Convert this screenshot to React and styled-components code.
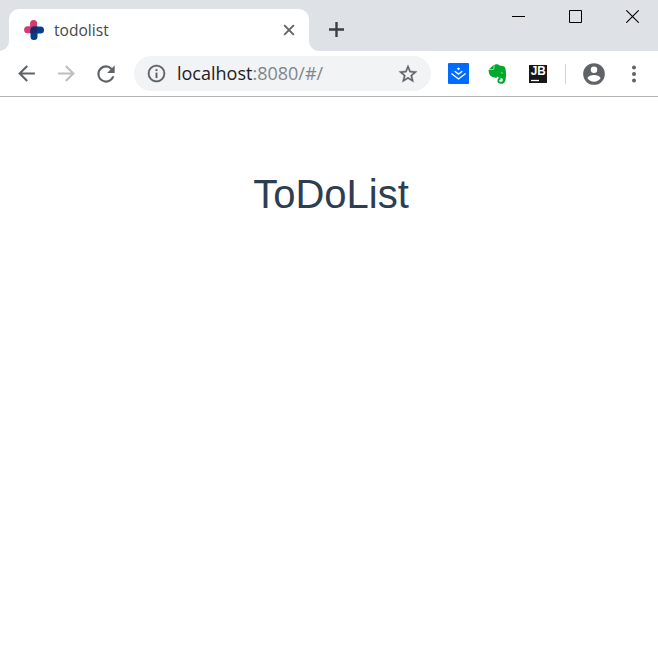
import React from "react";
import styled, { createGlobalStyle } from "styled-components";

const GlobalStyle = createGlobalStyle`
  *, *::before, *::after { box-sizing: border-box; }
  body { margin: 0; background: #fff; overflow: hidden; }
`;

const Browser = styled.div`
  display: flex;
  flex-direction: column;
  width: 658px;
  height: 667px;
  background: #fff;
  font-family: "Open Sans", "Noto Sans", sans-serif;
`;

const TabStrip = styled.header`
  display: flex;
  align-items: flex-end;
  height: 51px;
  padding-left: 9px;
  background: #dee1e6;
`;

const Tab = styled.div`
  position: relative;
  display: flex;
  align-items: center;
  width: 300px;
  height: 42px;
  padding: 0 13px 0 14px;
  border-radius: 10px 10px 0 0;
  background: #fff;

  &::before,
  &::after {
    content: "";
    position: absolute;
    bottom: 0;
    width: 10px;
    height: 10px;
  }
  &::before {
    left: -10px;
    background: radial-gradient(circle at 0 0, transparent 9.5px, #fff 10.3px);
  }
  &::after {
    right: -10px;
    background: radial-gradient(circle at 100% 0, transparent 9.5px, #fff 10.3px);
  }
`;

const TabTitle = styled.span`
  flex: 1;
  margin-left: 9px;
  color: #45484d;
  font-size: 15.6px;
  line-height: 20px;
`;

const Icon = styled.svg`
  display: block;
  flex: none;
  width: ${(p) => p.$size}px;
  height: ${(p) => p.$size}px;
  color: ${(p) => p.$color || "#5f6368"};
`;

const IconButton = styled.button`
  display: flex;
  align-items: center;
  justify-content: center;
  flex: none;
  width: ${(p) => p.$width || 40}px;
  height: ${(p) => p.$height || 36}px;
  padding: 0;
  border: 0;
  background: none;
`;

const NewTab = styled(IconButton)`
  margin-left: 7px;
  align-self: flex-end;
`;

const WindowControls = styled.div`
  display: flex;
  align-self: flex-start;
  margin-left: auto;
  margin-right: -3px;
`;

const Toolbar = styled.nav`
  display: flex;
  align-items: center;
  height: 46px;
  padding: 0 0 0 6px;
  border-bottom: 1px solid #b3b3b4;
`;

const AddressBar = styled.div`
  display: flex;
  align-items: center;
  width: 297px;
  height: 35px;
  margin-left: 8px;
  margin-right: 6px;
  padding: 0 12px 0 12px;
  border-radius: 18px;
  background: #f1f3f4;
`;

const Url = styled.span`
  flex: 1;
  margin-left: 10px;
  padding-bottom: 2px;
  color: #80868b;
  font-size: 18px;
  line-height: 24px;
  white-space: nowrap;
`;

const Host = styled.span`
  color: #202124;
`;

const Separator = styled.span`
  width: 1px;
  height: 20px;
  margin: 0 8px 0 7px;
  background: #cfd1d4;
`;

const Extensions = styled.div`
  display: flex;
  align-items: center;
  padding-left: 1px;
`;

const Page = styled.main`
  flex: 1;
  padding: 74px 0 0 4px;
`;

const Heading = styled.h1`
  margin: 0;
  color: #2c3e50;
  font: 400 40px/46px "Liberation Sans", Arial, sans-serif;
  text-align: center;
`;

const Favicon = () => (
  <Icon $size={22} viewBox="0 0 22 22">
    <path d="M10.6 4.6v6.2H4.6" fill="none" stroke="#d43a6c" strokeWidth="7" strokeLinecap="round" strokeLinejoin="round" />
    <path d="M17.5 11H11v6.5" fill="none" stroke="#053f8c" strokeWidth="7" strokeLinecap="round" strokeLinejoin="round" />
    <path d="M7.5 14.3V11A3.5 3.5 0 0 1 11 7.5h3.1v3.3a3.5 3.5 0 0 1-3.5 3.5z" fill="#20266d" />
  </Icon>
);

const Close = () => (
  <Icon $size={14} viewBox="0 0 14 14">
    <path d="M2.2 2.2l9.6 9.6M11.8 2.2l-9.6 9.6" stroke="currentColor" strokeWidth="1.9" />
  </Icon>
);

const Plus = () => (
  <Icon $size={17} $color="#3c4043" viewBox="0 0 17 17">
    <path d="M8.5 1v15M1 8.5h15" stroke="currentColor" strokeWidth="2.4" />
  </Icon>
);

const Minimize = () => (
  <Icon $size={13} viewBox="0 0 13 13">
    <path d="M0 6.5h13" stroke="#000" />
  </Icon>
);

const Maximize = () => (
  <Icon $size={13} viewBox="0 0 13 13">
    <path d="M.5.5h12v12H.5z" fill="none" stroke="#000" />
  </Icon>
);

const CloseWindow = () => (
  <Icon $size={13} viewBox="0 0 13 13">
    <path d="M.3.3l12.4 12.4M12.7.3L.3 12.7" stroke="#000" strokeWidth="1.1" />
  </Icon>
);

const ArrowBack = () => (
  <Icon $size={25} viewBox="0 0 24 24">
    <path d="M20 11H7.83l5.59-5.59L12 4l-8 8 8 8 1.41-1.41L7.83 13H20v-2z" fill="currentColor" />
  </Icon>
);

const ArrowForward = () => (
  <Icon $size={25} $color="#bcbec1" viewBox="0 0 24 24">
    <path d="M12 4l-1.41 1.41L16.17 11H4v2h12.17l-5.58 5.59L12 20l8-8z" fill="currentColor" />
  </Icon>
);

const Reload = () => (
  <Icon $size={26} viewBox="0 0 24 24">
    <path d="M17.65 6.35A7.96 7.96 0 0 0 12 4a8 8 0 1 0 7.73 10h-2.08A6 6 0 1 1 12 6c1.66 0 3.14.69 4.22 1.78L13 11h7V4l-2.35 2.35z" fill="currentColor" />
  </Icon>
);

const Info = () => (
  <Icon $size={21} viewBox="0 0 24 24">
    <path d="M11 7h2v2h-2zm0 4h2v6h-2zm1-9a10 10 0 1 0 0 20 10 10 0 0 0 0-20zm0 18a8 8 0 1 1 0-16 8 8 0 0 1 0 16z" fill="currentColor" stroke="currentColor" strokeWidth=".2" />
  </Icon>
);

const Star = () => (
  <Icon $size={22} viewBox="0 0 24 24">
    <path d="M22 9.24l-7.19-.62L12 2 9.19 8.63 2 9.24l5.46 4.73L5.82 21 12 17.27 18.18 21l-1.63-7.03L22 9.24zM12 15.4l-3.76 2.27 1-4.28-3.32-2.88 4.38-.38L12 6.1l1.71 4.04 4.38.38-3.32 2.88 1 4.28L12 15.4z" fill="currentColor" stroke="currentColor" strokeWidth=".3" />
  </Icon>
);

const Juejin = () => (
  <Icon $size={21} viewBox="0 0 20 20">
    <rect width="20" height="20" rx="1" fill="#006cff" />
    <path d="M10 4.3l1.6 1.2L10 6.8 8.4 5.5z" fill="#fff" />
    <path d="M6.4 7.8L10 10.6l3.6-2.8M3.2 10L10 15.2l6.8-5.2" fill="none" stroke="#fff" strokeWidth="1.3" />
  </Icon>
);

const Evernote = () => (
  <Icon $size={20} $color="#00a82d" viewBox="0 0 20 20">
    <path d="M5.7.8L1.2 5.3h3.3c.8 0 1.2-.4 1.2-1.2z" fill="currentColor" />
    <path d="M6.3 1.1C7 .1 10.5-.1 11.5 1.6c1.8.3 4.8.4 5.4 1.6 1.5 2.9 1.4 10.9.2 14.1-.8 2.1-2 2.5-4 2.5-2.3 0-3.7-1.2-3.7-3 0-1.9 1.2-3 3.2-3v2c-1.9-.1-1.9 2 .3 2 1.8 0 2-1.1 1.8-2.6-.3-1.4-1.3-1.2-2.8-1.3-1.2-.1-1.9-.7-2.2-1.7-.5 1.3-1.8 1.7-3.4 1.4C2.8 12.9.5 10.4.6 5.8h4.2c1.1 0 1.5-.6 1.5-1.7z" fill="currentColor" />
    <path d="M12.9 9.3c.2-1.2 1.7-1.3 2.1.2-.7-.3-1.4-.4-2.1-.2z" fill="#fff" />
  </Icon>
);

const JetBrains = () => (
  <Icon $size={18} viewBox="0 0 18 18">
    <rect width="18" height="18" fill="#151719" />
    <text x="1.8" y="10.4" fill="#fff" fontFamily="Liberation Sans, Arial, sans-serif" fontWeight="700" fontSize="12" textLength="15" lengthAdjust="spacingAndGlyphs">JB</text>
    <path d="M2 15.5h8" stroke="#fff" strokeWidth="1.3" />
  </Icon>
);

const Account = () => (
  <Icon $size={26} viewBox="0 0 24 24">
    <path d="M12 2a10 10 0 1 0 0 20 10 10 0 0 0 0-20zm0 3a3 3 0 1 1 0 6 3 3 0 0 1 0-6zm0 14.2a7.2 7.2 0 0 1-6-3.22c.03-1.99 4-3.08 6-3.08s5.97 1.09 6 3.08a7.2 7.2 0 0 1-6 3.22z" fill="currentColor" />
  </Icon>
);

const More = () => (
  <Icon $size={24} viewBox="0 0 24 24">
    <circle cx="12" cy="5.6" r="2" fill="currentColor" />
    <circle cx="12" cy="12" r="2" fill="currentColor" />
    <circle cx="12" cy="18.4" r="2" fill="currentColor" />
  </Icon>
);

export default function App() {
  return (
    <>
      <GlobalStyle />
      <Browser>
        <TabStrip>
          <Tab>
            <Favicon />
            <TabTitle>todolist</TabTitle>
            <IconButton $width={14} $height={14} aria-label="Close tab"><Close /></IconButton>
          </Tab>
          <NewTab $height={43} $width={41} aria-label="New tab"><Plus /></NewTab>
          <WindowControls>
            <IconButton $width={57} $height={33} aria-label="Minimize"><Minimize /></IconButton>
            <IconButton $width={57} $height={33} aria-label="Maximize"><Maximize /></IconButton>
            <IconButton $width={57} $height={33} aria-label="Close"><CloseWindow /></IconButton>
          </WindowControls>
        </TabStrip>
        <Toolbar>
          <IconButton aria-label="Back"><ArrowBack /></IconButton>
          <IconButton aria-label="Forward"><ArrowForward /></IconButton>
          <IconButton aria-label="Reload"><Reload /></IconButton>
          <AddressBar>
            <Info />
            <Url><Host>localhost</Host>:8080/#/</Url>
            <Star />
          </AddressBar>
          <Extensions>
            <IconButton aria-label="Juejin"><Juejin /></IconButton>
            <IconButton aria-label="Evernote"><Evernote /></IconButton>
            <IconButton aria-label="JetBrains"><JetBrains /></IconButton>
          </Extensions>
          <Separator />
          <IconButton aria-label="Account"><Account /></IconButton>
          <IconButton aria-label="Menu"><More /></IconButton>
        </Toolbar>
        <Page>
          <Heading>ToDoList</Heading>
        </Page>
      </Browser>
    </>
  );
}
